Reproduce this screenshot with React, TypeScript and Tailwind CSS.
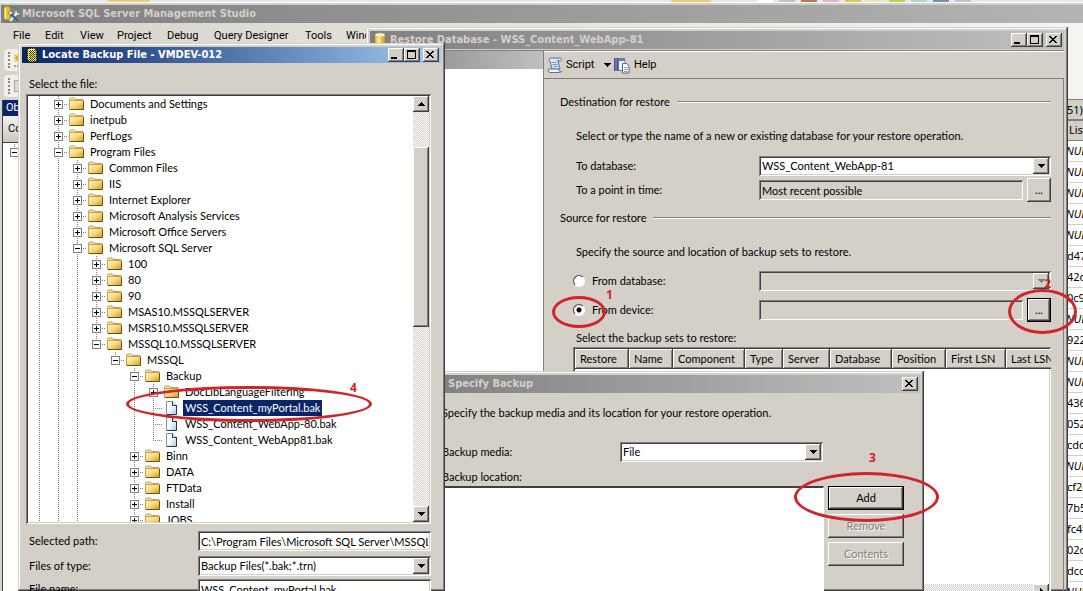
// ** React
import type {ReactNode} from "react";

// ** Styles shared by the classic controls
const RAISED = "bg-[#d4d0c8] shadow-[inset_-1px_-1px_0_#404040,inset_1px_1px_0_#fff,inset_-2px_-2px_0_#808080]";
const SUNKEN = "shadow-[inset_1px_1px_0_#808080,inset_-1px_-1px_0_#fff,inset_2px_2px_0_#404040,inset_-2px_-2px_0_#d4d0c8]";
const WINDOW = "bg-[#d4d0c8] shadow-[inset_-1px_-1px_0_#404040,inset_1px_1px_0_#d4d0c8,inset_-2px_-2px_0_#808080,inset_2px_2px_0_#fff]";
const TITLE_FONT = "font-['DejaVu_Sans_Condensed','DejaVu_Sans',sans-serif] text-[11px] font-bold whitespace-nowrap";
const MENU_FONT = "font-[Roboto,sans-serif]";
const GRID_FONT = "font-['Noto_Sans',sans-serif]";
const CHECKER = "bg-[repeating-conic-gradient(#fff_0_25%,#d4d0c8_0_50%)] bg-[length:2px_2px]";

// ** Data
// Guides: | line, + closed node, - open node, m last open node, t file, l last file
const TREE = [
    {guides: "|+", label: "Documents and Settings"},
    {guides: "|+", label: "inetpub"},
    {guides: "|+", label: "PerfLogs"},
    {guides: "|-", label: "Program Files"},
    {guides: "||+", label: "Common Files"},
    {guides: "||+", label: "IIS"},
    {guides: "||+", label: "Internet Explorer"},
    {guides: "||+", label: "Microsoft Analysis Services"},
    {guides: "||+", label: "Microsoft Office Servers"},
    {guides: "||-", label: "Microsoft SQL Server"},
    {guides: "|||+", label: "100"},
    {guides: "|||+", label: "80"},
    {guides: "|||+", label: "90"},
    {guides: "|||+", label: "MSAS10.MSSQLSERVER"},
    {guides: "|||+", label: "MSRS10.MSSQLSERVER"},
    {guides: "|||m", label: "MSSQL10.MSSQLSERVER"},
    {guides: "||| m", label: "MSSQL"},
    {guides: "|||  -", label: "Backup"},
    {guides: "|||  |+", label: "DocLibLanguageFiltering"},
    {guides: "|||  |t", label: "WSS_Content_myPortal.bak", selected: true},
    {guides: "|||  |t", label: "WSS_Content_WebApp-80.bak"},
    {guides: "|||  |l", label: "WSS_Content_WebApp81.bak"},
    {guides: "|||  +", label: "Binn"},
    {guides: "|||  +", label: "DATA"},
    {guides: "|||  +", label: "FTData"},
    {guides: "|||  +", label: "Install"},
    {guides: "|||  +", label: "JOBS"},
];

const COLUMNS = [
    {label: "Restore", width: "w-[54px]"},
    {label: "Name", width: "w-[44px]"},
    {label: "Component", width: "w-[72px]"},
    {label: "Type", width: "w-[38px]"},
    {label: "Server", width: "w-[47px]"},
    {label: "Database", width: "w-[62px]"},
    {label: "Position", width: "w-[54px]"},
    {label: "First LSN", width: "w-[60px]"},
    {label: "Last LSN", width: "w-[60px]"},
];

const RESULTS = [
    "NULL", "NULL", "NULL", "NULL", "NULL", "d47", "42d", "0c9", "NULL", "922", "NULL",
    "NULL", "436", "052", "cdd", "NULL", "cf2e", "7b5", "fc49", "02d", "dcd", "NULL",
];

const MENU = [
    {label: "File", width: "w-8"},
    {label: "Edit", width: "w-[35px]"},
    {label: "View", width: "w-[37px]"},
    {label: "Project", width: "w-[50px]"},
    {label: "Debug", width: "w-[47px]"},
    {label: "Query Designer", width: "w-[91px]"},
    {label: "Tools", width: "w-[41px]"},
    {label: "Window", width: "w-[50px]"},
];

const SWATCHES = [
    "bg-white", "bg-[#c3c3c3]", "bg-[#b97a57]", "bg-[#efb0c0]", "bg-[#eac24c]",
    "bg-[#efe4b0]", "bg-[#b5d64a]", "bg-[#a9d5dc]", "bg-[#7092be]", "bg-[#c8bfd7]",
];

// ** Icons
const FolderIcon = () => (
    <svg width="16" height="16" viewBox="0 0 16 16" className="shrink-0" aria-hidden="true">
        <defs>
            <linearGradient id="folder" x1="0" y1="0" x2="1" y2="1">
                <stop offset="0" stopColor="#fff6c4"/>
                <stop offset=".5" stopColor="#f7d97a"/>
                <stop offset="1" stopColor="#d9930f"/>
            </linearGradient>
        </defs>
        <path d="M.5 13V3l1-1h4l1 1.500h7.500v2" fill="#f3e2a0" stroke="#b5a26c"/>
        <path d="M.5 4.500h14v9H.5z" fill="url(#folder)" stroke="#c3a252"/>
        <path d="M1 13.500h13.500V5" fill="none" stroke="#6b5214"/>
    </svg>
);

const FileIcon = () => (
    <svg width="16" height="16" viewBox="0 0 16 16" className="shrink-0" aria-hidden="true">
        <defs>
            <linearGradient id="file" x1="0" y1="0" x2="1" y2="1">
                <stop offset=".4" stopColor="#fff"/>
                <stop offset="1" stopColor="#a9c6e8"/>
            </linearGradient>
        </defs>
        <path d="M2.500 1.500h6l4 4v9h-10z" fill="url(#file)" stroke="#8a9099"/>
        <path d="M8.500 1.500v4h4" fill="#dfe9f5" stroke="#26364e"/>
        <path d="M12.500 5v9.500H3" fill="none" stroke="#26364e"/>
    </svg>
);

const DatabaseIcon = () => (
    <svg width="12" height="18" viewBox="0 0 12 18" aria-hidden="true">
        <defs>
            <linearGradient id="database">
                <stop offset="0" stopColor="#e9a90c"/>
                <stop offset=".35" stopColor="#fff3a0"/>
                <stop offset="1" stopColor="#d58b00"/>
            </linearGradient>
        </defs>
        <path d="M1 4v11c0 3 10 3 10 0V4z" fill="url(#database)"/>
        <ellipse cx="6" cy="4" rx="5" ry="2" fill="#f7f3df" stroke="#c9a23a" strokeWidth=".5"/>
    </svg>
);

const StudioIcon = () => (
    <svg width="17" height="17" viewBox="0 0 17 17" aria-hidden="true">
        <path d="M2.500 1.500h12v14h-12z" fill="none" stroke="#3c8a3c" strokeDasharray="2 2"/>
        <path d="M1 2c0-2 6-2 6 0v10c0 2-6 2-6 0z" fill="#edba22"/>
        <path d="M2.500 2.500v10" stroke="#fff3a0" strokeWidth="1.500"/>
        <path d="M7 15l7-8" stroke="#f0f0f0" strokeWidth="2"/>
        <path d="M7 7l8 8" stroke="#2f5f96" strokeWidth="2"/>
        <path d="M5 7l3-2 2 2-3 2z" fill="#e4e8ee" stroke="#555" strokeWidth=".5"/>
        <path d="M13 5v3h3" fill="none" stroke="#eee" strokeWidth="1.500"/>
    </svg>
);

const LocateIcon = () => (
    <svg width="12" height="16" viewBox="0 0 12 16" aria-hidden="true">
        <defs>
            <pattern id="weave" width="2" height="2" patternUnits="userSpaceOnUse">
                <path d="M0 0h2v2H0z" fill="#333300"/>
                <path d="M0 0h1v1H0zM1 1h1v1H1z" fill="#f4f494"/>
            </pattern>
        </defs>
        <path d="M1 3c0-3 10-3 10 0v10c0 3-10 3-10 0z" fill="url(#weave)" stroke="#111"/>
        <path d="M2.500 3v10" stroke="#e8e800"/>
        <path d="M9.500 3v10" stroke="#b8b800"/>
        <path d="M3 2.500h6" stroke="#ffffb0"/>
    </svg>
);

const ScriptIcon = () => (
    <svg width="16" height="16" viewBox="0 0 16 16" aria-hidden="true">
        <path d="M4 1h9c2 0 2 3 0 3h-2l2 8H5L3 4C1 4 2 1 4 1z" fill="#dbe7f8" stroke="#5573a8"/>
        <path d="M1.500 12h10c0 3 2 3 3 2 0 1-1 1.500-2 1.500H3c-2 0-2-3-1.500-3.500z" fill="#f3f7fd" stroke="#5573a8"/>
        <path d="M5 5.500h5M5.500 7.500h5M6 9.500h5" stroke="#7d98c8"/>
        <path d="M11 4V2.500" stroke="#5573a8"/>
    </svg>
);

const HelpIcon = () => (
    <svg width="17" height="17" viewBox="0 0 17 17" aria-hidden="true">
        <path d="M1 1h11v13H1z" fill="#7474b4"/>
        <path d="M1.500 1v13M4.500 1v13" stroke="#4c4c8c"/>
        <path d="M5.500 3.500h5l2 2v8h-7z" fill="#eef4ff" stroke="#5a78ae"/>
        <path d="M9.500 6.500h4l2.500 2.500v7H9.500z" fill="#fff" stroke="#49699e"/>
        <path d="M11 10.500h3.500M11 12.500h3.500M11 14.500h3.500" stroke="#7f9ccf"/>
    </svg>
);

type TTriangle = {
    direction?: "up" | "down" | "right"
    muted?: boolean
}

const Triangle = ({direction = "down", muted}: TTriangle) => {
    const shapes = {down: "M1 2h7L4.500 6z", up: "M1 6h7L4.500 2z", right: "M3 0v8l4-4z"};
    return (
        <svg width="9" height="8" viewBox="0 0 9 8" shapeRendering="crispEdges" aria-hidden="true">
            <path d={shapes[direction]} fill={muted ? "#808080" : "#000"}/>
        </svg>
    );
};

// ** Tree guide cell, one per level
const Guide = ({kind}: { kind: string }) => {
    const isNode = "+-m".includes(kind);
    const isLast = "ml".includes(kind);
    return (
        <svg width="19" height="16" viewBox="0 0 19 16" className="shrink-0" shapeRendering="crispEdges" aria-hidden="true">
            {kind !== " " && (
                <path d={isLast ? "M9.500 0v8" : "M9.500 0v16"} stroke="#808080" strokeDasharray="1 1"/>
            )}
            {kind !== " " && kind !== "|" && (
                <path d="M9 8.500h10" stroke="#808080" strokeDasharray="1 1"/>
            )}
            {isNode && <path d="M5.500 4.500h8v8h-8z" fill="#fff" stroke="#808080"/>}
            {isNode && <path d="M7 8.500h5" stroke="#000"/>}
            {kind === "+" && <path d="M9.500 6v5" stroke="#000"/>}
        </svg>
    );
};

// ** Title bar
const TITLE_GLYPHS = {
    Minimize: "M3 9h6v2H3z",
    Maximize: "M3 2h9v9H3zM4 4v6h7V4z",
    Close: "M3 3h2v1h1v1h2V4h1V3h2v1h-1v1H9v1H8v1h1v1h1v1h1v1H9V9H8V8H6v1H5v1H3V9h1V8h1V7h1V6H5V5H4V4H3z",
};

const TitleButton = ({name}: { name: keyof typeof TITLE_GLYPHS }) => (
    <button type="button" aria-label={name} className={`${RAISED} h-[14px] w-4 ${name === "Close" ? "ml-[3px]" : ""}`}>
        <svg width="16" height="14" viewBox="0 0 16 14" shapeRendering="crispEdges" aria-hidden="true">
            <path d={TITLE_GLYPHS[name]} fillRule="evenodd"/>
        </svg>
    </button>
);

type TTitleBar = {
    title: string
    icon?: ReactNode
    active?: boolean
    closeOnly?: boolean
}

const TitleBar = ({title, icon, active, closeOnly}: TTitleBar) => (
    <header
        className={`flex h-[18px] items-center gap-0.5 px-0.5 ${active ? "bg-linear-to-r from-[#0a246a] to-[#a6caf0] text-white" : "bg-linear-to-r from-[#808080] to-[#c0c0c0] text-[#d4d0c8]"}`}
    >
        <span className="flex w-4 shrink-0 justify-center">{icon}</span>
        <h2 className={`${TITLE_FONT} grow`}>{title}</h2>
        <div className="flex">
            {!closeOnly && <TitleButton name="Minimize"/>}
            {!closeOnly && <TitleButton name="Maximize"/>}
            <TitleButton name="Close"/>
        </div>
    </header>
);

// ** Controls
type TSelect = {
    id: string
    value?: string
    disabled?: boolean
    className?: string
}

const Select = ({id, value = "", disabled, className = ""}: TSelect) => (
    <div className={`relative h-5 ${SUNKEN} ${disabled ? "" : "bg-white"} ${className}`}>
        <select id={id} disabled={disabled} className="h-5 w-full appearance-none bg-transparent pr-5 pl-[3px]">
            <option>{value}</option>
        </select>
        <span className={`${RAISED} pointer-events-none absolute top-0.5 right-0.5 flex h-4 w-4 items-center justify-center`}>
            <Triangle muted={disabled}/>
        </span>
    </div>
);

type TTextBox = {
    id: string
    value?: string
    disabled?: boolean
    className?: string
}

const TextBox = ({id, value = "", disabled, className = ""}: TTextBox) => (
    <input
        id={id}
        type="text"
        defaultValue={value}
        readOnly={disabled}
        className={`h-5 min-w-0 px-[3px] ${SUNKEN} ${disabled ? "bg-[#d4d0c8]" : "bg-white"} ${className}`}
    />
);

type TButton = {
    children: ReactNode
    label?: string
    isDefault?: boolean
    disabled?: boolean
    className?: string
}

const Button = ({children, label, isDefault, disabled, className = ""}: TButton) => (
    <button
        type="button"
        aria-label={label}
        disabled={disabled}
        className={`h-6 ${RAISED} ${isDefault ? "border border-black" : ""} ${disabled ? "text-[#808080] [text-shadow:1px_1px_0_#fff]" : ""} ${className}`}
    >
        {children}
    </button>
);

const Radio = ({id, checked}: { id: string, checked?: boolean }) => (
    <input
        id={id}
        type="radio"
        name="source"
        defaultChecked={checked}
        className="h-3 w-3 appearance-none rounded-full border border-t-[#404040] border-r-white border-b-white border-l-[#404040] bg-white checked:bg-[radial-gradient(circle,#000_2px,#fff_3px)]"
    />
);

const SectionTitle = ({children}: { children: ReactNode }) => (
    <div className="flex h-4 items-center gap-[7px]">
        <h3>{children}</h3>
        <span className="h-0.5 grow border-t border-t-[#808080] bg-white"/>
    </div>
);

// ** Numbered red marks
type TMark = {
    step: number
    ring: string
    number: string
}

const Mark = ({step, ring, number}: TMark) => (
    <>
        <span className={`pointer-events-none absolute z-10 rounded-[50%] border-3 border-[#d2232a] ${ring}`}/>
        <span className={`pointer-events-none absolute z-10 font-['Open_Sans',sans-serif] text-[12px] leading-4 font-bold text-[#d2232a] ${number}`}>
            {step}
        </span>
    </>
);

// ** Windows
const StudioWindow = () => (
    <main className="flex h-full flex-col bg-[#d4d0c8]">
        {/* Strip of the program behind */}
        <div className="flex h-[3px] shrink-0 justify-end gap-1.5 border-b border-white bg-[#e4e9f0] pr-28">
            <span className="mr-auto ml-[108px] w-[42px] bg-[#f3c877]"/>
            <span className="mr-10 w-10 bg-[#f3c877]"/>
            {SWATCHES.map((color) => (
                <span key={color} className={`w-4 ${color}`}/>
            ))}
        </div>

        <header className="mt-0.5 ml-px flex h-[18px] shrink-0 items-center gap-0.5 bg-linear-to-r from-[#808080] to-[#b4b4b4] pl-0.5 text-[#d4d0c8]">
            <StudioIcon/>
            <h1 className={TITLE_FONT}>Microsoft SQL Server Management Studio</h1>
        </header>

        <nav className={`${MENU_FONT} flex h-[26px] shrink-0 items-center bg-linear-to-r from-[#d8d4cc] to-[#f5f4f1] pl-[13px]`}>
            {MENU.map((item) => (
                <button key={item.label} type="button" className={`shrink-0 text-left whitespace-nowrap ${item.width}`}>
                    {item.label}
                </button>
            ))}
        </nav>

        <div className="flex grow justify-between overflow-hidden bg-linear-to-r from-[#d8d4cc] to-[#f5f4f1]">
            {/* Object explorer */}
            <aside className="flex w-[200px] flex-col">
                <div className="mb-1 ml-1 flex h-[22px] items-center gap-1 rounded-l bg-[#f1efeb] pl-1">
                    <span className="h-4 w-0 border-l-2 border-dotted border-[#8b8778]"/>
                    <svg width="16" height="16" viewBox="0 0 16 16" className="-ml-px" aria-hidden="true">
                        <path d="M5 1l1 3 3-2-2 3 3 1-3 1 2 3-3-2-1 3-1-3-3 2 2-3-3-1 3-1-2-3 3 2z" fill="#f2a900"/>
                        <path d="M1 14h8" stroke="#6b4a1e" strokeDasharray="2 1"/>
                    </svg>
                </div>
                <div className="mb-[3px] ml-1 flex h-[22px] items-center gap-1 rounded-l bg-[#f1efeb] pl-1">
                    <span className="h-4 w-0 border-l-2 border-dotted border-[#8b8778]"/>
                    <span className="h-3 w-3 border border-[#a7a49b] bg-[#dcdad4]"/>
                </div>
                <div className={`${MENU_FONT} ml-0.5 flex grow flex-col border-l border-[#404040]`}>
                    <h2 className="h-4 bg-[#0a246a] pl-[3px] leading-4 text-white">Object Explorer</h2>
                    <div className="h-[26px] bg-linear-to-b from-[#f5f4f1] to-[#cbc7bd] pl-[5px] leading-[26px]">Connect</div>
                    <div className="grow border-t border-[#404040] bg-white pt-px pl-0.5">
                        <Guide kind="m"/>
                    </div>
                </div>
            </aside>

            {/* Query results */}
            <section className={`${GRID_FONT} mt-[50px] w-[19px] overflow-hidden whitespace-nowrap`}>
                <h2 className="h-5 border-t border-[#808080] bg-[#d4d0c8] pl-[3px] leading-[19px]">51))</h2>
                <table className="w-full table-fixed border-collapse bg-white">
                    <thead>
                        <tr>
                            <th className="h-5 border-t-2 border-b border-[#808080] bg-[#d4d0c8] p-0 pl-[5px] text-left font-normal">List</th>
                        </tr>
                    </thead>
                    <tbody>
                        {RESULTS.map((value, index) => (
                            <tr key={index}>
                                <td className={`h-[21px] border-b border-[#d4d0c8] p-0 ${value === "NULL" ? "pl-0.5 italic" : "pl-[3px]"}`}>
                                    {value}
                                </td>
                            </tr>
                        ))}
                    </tbody>
                </table>
            </section>
        </div>
    </main>
);

const RestoreWindow = () => (
    <section className={`${WINDOW} absolute top-[27px] right-[15px] bottom-0 left-[366px] flex flex-col px-1 pt-1`}>
        <TitleBar title="Restore Database - WSS_Content_WebApp-81" icon={<DatabaseIcon/>}/>
        <div className="mt-px flex grow border-t border-[#808080]">
            <aside className="flex w-[173px] shrink-0 flex-col bg-white">
                <h3 className={`${TITLE_FONT} h-[18px] bg-linear-to-r from-[#808080] to-[#c0c0c0] text-[#d4d0c8]`}>Select a page</h3>
            </aside>

            <div className="flex min-w-0 grow flex-col border-l border-[#808080]">
                <div className={`${MENU_FONT} flex h-[27px] items-center border-t border-white pl-[3px]`}>
                    <ScriptIcon/>
                    <button type="button" className="ml-[3px] flex w-[46px] items-center justify-between">
                        Script <Triangle/>
                    </button>
                    <span className="ml-px">
                        <HelpIcon/>
                    </span>
                    <button type="button" className="ml-1">Help</button>
                </div>

                <form className="flex grow flex-col border-t border-r border-[#808080] pt-[15px] pr-3 pl-4">
                    <SectionTitle>Destination for restore</SectionTitle>
                    <p className="mt-[18px] ml-4 h-4">Select or type the name of a new or existing database for your restore operation.</p>
                    <div className="mt-3 flex h-5 items-center pl-4">
                        <label htmlFor="to-database" className="w-[183px] shrink-0">To database:</label>
                        <Select id="to-database" value="WSS_Content_WebApp-81" className="grow"/>
                    </div>
                    <div className="mt-0.5 flex h-6 items-center pl-4">
                        <label htmlFor="point-in-time" className="w-[183px] shrink-0">To a point in time:</label>
                        <TextBox id="point-in-time" value="Most recent possible" disabled className="grow"/>
                        <Button label="Choose point in time" className="ml-1 w-6">...</Button>
                    </div>

                    <div className="mt-2">
                        <SectionTitle>Source for restore</SectionTitle>
                    </div>
                    <p className="mt-[18px] ml-4 h-4">Specify the source and location of backup sets to restore.</p>
                    <div className="mt-[11px] flex h-5 items-center pl-[13px]">
                        <Radio id="from-database"/>
                        <label htmlFor="from-database" className="ml-[7px] w-[167px] shrink-0">From database:</label>
                        <Select id="source-database" disabled className="grow"/>
                    </div>
                    <div className="relative mt-[7px] flex h-6 items-center pl-[13px]">
                        <Radio id="from-device" checked/>
                        <label htmlFor="from-device" className="ml-[7px] w-[167px] shrink-0">From device:</label>
                        <TextBox id="source-device" disabled className="grow"/>
                        <Button label="Choose device" isDefault className="ml-1 w-6">...</Button>
                        <Mark step={1} ring="-left-2 -top-0.5 h-8 w-[54px]" number="left-[46px] -top-[11px]"/>
                        <Mark step={2} ring="-right-[26px] -top-[9px] h-[45px] w-[69px]" number="right-0 -top-[22px]"/>
                    </div>

                    <p className="mt-2 ml-4 h-4">Select the backup sets to restore:</p>
                    <div className={`${SUNKEN} mt-px ml-[13px] flex grow flex-col overflow-hidden bg-white p-0.5 pb-0`}>
                        <table className="w-max border-collapse">
                            <thead>
                                <tr>
                                    {COLUMNS.map((column) => (
                                        <th
                                            key={column.label}
                                            className={`h-5 ${RAISED} ${column.width} box-border p-0 pl-[5px] text-left font-normal whitespace-nowrap`}
                                        >
                                            {column.label}
                                        </th>
                                    ))}
                                </tr>
                            </thead>
                        </table>
                        <div className={`${CHECKER} mt-auto flex h-[7px] justify-end`}>
                            <span className={`${RAISED} flex h-4 w-4 items-center justify-center`}>
                                <Triangle direction="right"/>
                            </span>
                        </div>
                    </div>
                </form>
            </div>
        </div>
    </section>
);

const SpecifyWindow = () => (
    <section className={`${WINDOW} absolute top-[371px] bottom-0 left-[424px] flex w-[500px] flex-col px-1 pt-1`}>
        <TitleBar title="Specify Backup" closeOnly/>
        <div className="flex grow flex-col pt-3 pr-4 pl-[14px]">
            <p className="h-4">Specify the backup media and its location for your restore operation.</p>
            <div className="mt-[21px] flex h-5 items-center">
                <label htmlFor="backup-media" className="w-[178px]">Backup media:</label>
                <Select id="backup-media" value="File" className="w-[203px]"/>
            </div>
            <p className="mt-[7px] h-4">Backup location:</p>
            <div className="mt-px flex grow gap-1">
                <div className="grow border-t-2 border-r border-t-[#404040] border-r-white bg-white"/>
                <div className="relative flex w-[76px] flex-col gap-1">
                    <Button isDefault>Add</Button>
                    <Button disabled>Remove</Button>
                    <Button disabled>Contents</Button>
                    <Mark step={3} ring="-left-[34px] -top-[14px] h-[50px] w-[145px]" number="left-[41px] -top-9"/>
                </div>
            </div>
        </div>
    </section>
);

const LocateWindow = () => (
    <section className={`${WINDOW} absolute top-[43px] bottom-0 left-[18px] flex w-[427px] flex-col px-1 pt-1`}>
        <TitleBar title="Locate Backup File - VMDEV-012" icon={<LocateIcon/>} active/>
        <div className="flex flex-col pt-[13px] pr-2.5 pl-1">
            <p className="ml-[3px] h-4">Select the file:</p>
            <div className="relative mt-0.5">
                <div className={`${SUNKEN} flex h-[430px] overflow-hidden bg-white p-0.5`}>
                    <ul className="grow overflow-hidden pl-0.5">
                        {TREE.map((node) => (
                            <li key={node.label} className="flex h-4 items-center">
                                {node.guides.split("").map((kind, index) => (
                                    <Guide key={index} kind={kind}/>
                                ))}
                                <span className="ml-px">
                                    {"tl".includes(node.guides.slice(-1)) ? <FileIcon/> : <FolderIcon/>}
                                </span>
                                <span className={`ml-[3px] px-0.5 leading-4 whitespace-nowrap ${node.selected ? "bg-[#0a246a] text-white" : ""}`}>
                                    {node.label}
                                </span>
                            </li>
                        ))}
                    </ul>
                    <div className={`${CHECKER} flex w-4 shrink-0 flex-col`}>
                        <button type="button" aria-label="Scroll up" className={`${RAISED} flex h-4 items-center justify-center`}>
                            <Triangle direction="up"/>
                        </button>
                        <span className={`${RAISED} mt-[35px] h-[180px]`}/>
                        <button type="button" aria-label="Scroll down" className={`${RAISED} mt-auto flex h-4 items-center justify-center`}>
                            <Triangle/>
                        </button>
                    </div>
                </div>
                <Mark step={4} ring="left-[100px] top-[292px] h-9 w-[246px]" number="left-[324px] top-[286px]"/>
            </div>

            <div className="mt-[7px] flex h-5 items-center pl-[3px]">
                <label htmlFor="selected-path" className="w-[169px] shrink-0">Selected path:</label>
                <TextBox id="selected-path" value="C:\Program Files\Microsoft SQL Server\MSSQL10.MSSQLSERVER" className="grow"/>
            </div>
            <div className="mt-[5px] flex h-5 items-center pl-[3px]">
                <label htmlFor="file-type" className="w-[169px] shrink-0">Files of type:</label>
                <Select id="file-type" value="Backup Files(*.bak;*.trn)" className="grow"/>
            </div>
            <div className="mt-[3px] flex h-5 items-center pl-[3px]">
                <label htmlFor="file-name" className="w-[169px] shrink-0">File name:</label>
                <TextBox id="file-name" value="WSS_Content_myPortal.bak" className="grow"/>
            </div>
        </div>
    </section>
);

const App = () => {
    return (
        <div className="relative h-screen overflow-hidden font-[Lato,'Liberation_Sans',sans-serif] text-[11px] leading-4 text-black">
            <StudioWindow/>
            <RestoreWindow/>
            <SpecifyWindow/>
            <LocateWindow/>
        </div>
    )
}

export default App
